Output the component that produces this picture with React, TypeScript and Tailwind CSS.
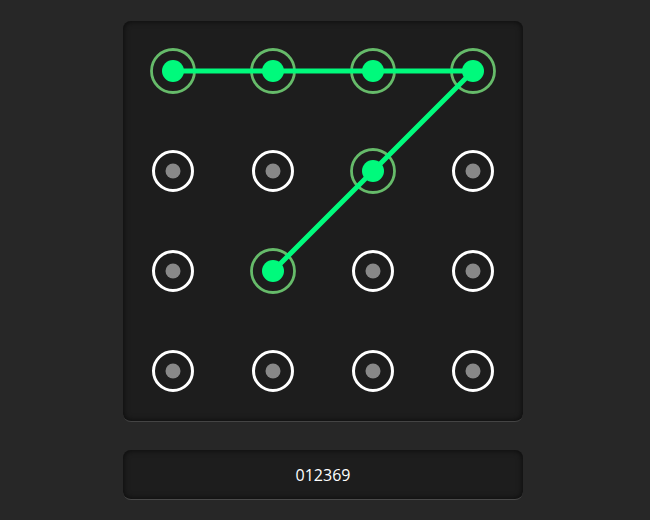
import React from 'react';

const CELL = 100;
const PATTERN = [0, 1, 2, 3, 6, 9];

const center = (i: number) => ({
  x: (i % 4) * CELL + CELL / 2,
  y: Math.floor(i / 4) * CELL + CELL / 2,
});

const PatternGrid: React.FC<{ pattern: number[] }> = ({ pattern }) => {
  const points = pattern.map(center);
  return (
    <svg width={400} height={400} viewBox="0 0 400 400" className="block">
      {Array.from({ length: 16 }).map((_, i) => {
        const { x, y } = center(i);
        const active = pattern.includes(i);
        return active ? (
          <circle key={i} cx={x} cy={y} r={21.5} fill="none" stroke="#66bb6a" strokeWidth={2.8} />
        ) : (
          <g key={i}>
            <circle cx={x} cy={y} r={19.5} fill="none" stroke="#ffffff" strokeWidth={3} />
            <circle cx={x} cy={y} r={7.5} fill="#888888" />
          </g>
        );
      })}
      <polyline
        points={points.map(p => `${p.x},${p.y}`).join(' ')}
        fill="none"
        stroke="#00fa7c"
        strokeWidth={5}
        strokeLinejoin="round"
        strokeLinecap="round"
      />
      {points.map((p, i) => (
        <circle key={i} cx={p.x} cy={p.y} r={11} fill="#00fa7c" />
      ))}
    </svg>
  );
};

export default function App() {
  return (
    <div className="w-[650px] h-[520px] bg-[#272727] flex flex-col items-center pt-[21px] pr-[4px] gap-[28px] font-['Open_Sans','Noto_Sans',sans-serif]">
      <div className="w-[400px] h-[401px] rounded-lg bg-[#1d1d1d] border-b border-[#444] shadow-[inset_0_0_6px_rgba(0,0,0,0.7)] overflow-hidden">
        <PatternGrid pattern={PATTERN} />
      </div>
      <div className="w-[400px] h-[50px] rounded-lg bg-[#1d1d1d] border-b border-[#4a4a4a] shadow-[inset_0_0_6px_rgba(0,0,0,0.7)] flex items-center justify-center text-white text-[16px]">
        {PATTERN.join('')}
      </div>
    </div>
  );
}
